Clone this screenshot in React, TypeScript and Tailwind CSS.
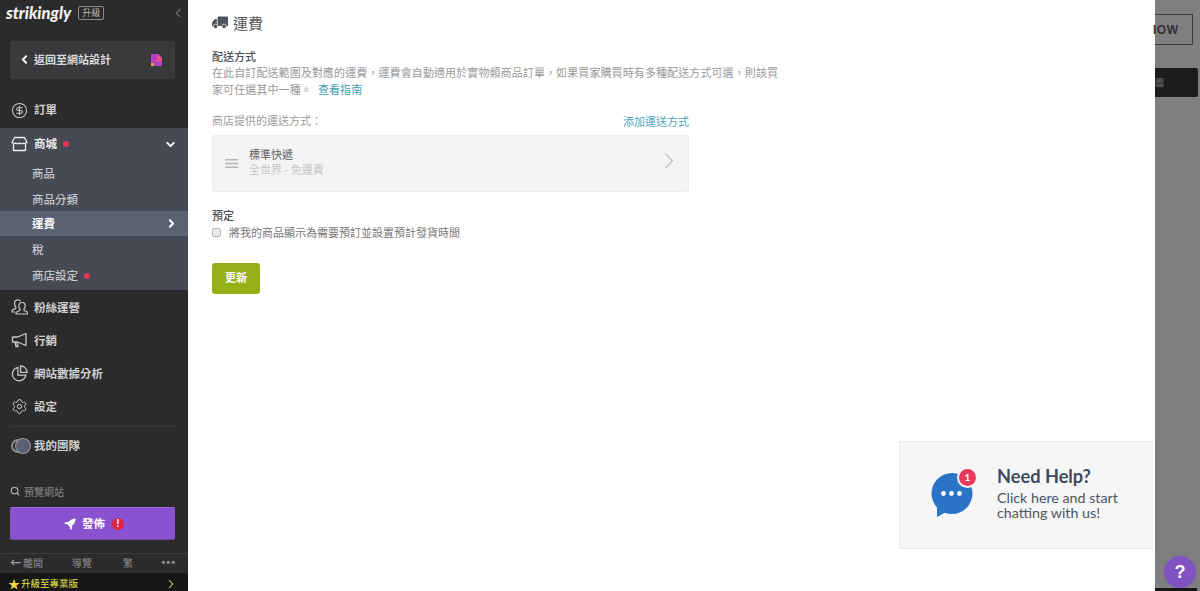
import { FC, ReactNode } from "react";
import { ChevronDown, ChevronLeft, ChevronRight, CircleDollarSign, Search, Settings } from "lucide-react";

const CJK = "font-['Noto_Sans_CJK_TC','Liberation_Sans',sans-serif]";

const Dot: FC = () => <span className="ml-1.5 h-[6px] w-[6px] rounded-full bg-[#e0394f]" />;

const NavRow: FC<{ icon: ReactNode; label: string; h: string }> = ({ icon, label, h }) => (
  <div className={`flex items-center pl-[11px] text-[11.5px] font-bold text-[#cfcfcf] ${h}`}>
    <span className="flex w-[23px] text-[#c9c9c9]">{icon}</span>
    {label}
  </div>
);

const SubRow: FC<{ label: string; h: string; dot?: boolean }> = ({ label, h, dot }) => (
  <div className={`flex items-center pl-8 pt-[2px] text-[11.5px] font-medium text-[#c3c6cc] ${h}`}>
    {label}
    {dot && <Dot />}
  </div>
);

const StoreIcon: FC = () => (
  <svg width="17" height="16" viewBox="0 0 17 16" fill="none" stroke="currentColor" strokeWidth="1.3" strokeLinejoin="round">
    <path d="M3.5 1.5h10l2.5 5q-1.5 1.2-3.8.7-1.8 1-3.7 0-1.9 1-3.7 0-2.3.5-3.8-.7Z" />
    <path d="M2.5 8v6.5h12V8" />
  </svg>
);

const FansIcon: FC = () => (
  <svg width="17" height="16" viewBox="0 0 17 16" fill="none" stroke="currentColor" strokeWidth="1.2" strokeLinejoin="round">
    <path d="M9.5 2.2C8.8 1.3 8 .9 7 .9 4.8.9 3.5 2.5 3.5 4.7c0 1.4.6 2.6 1.3 3.3v1.4L1 11.2V13h3" />
    <path d="M11 3.5c-2 0-3.2 1.5-3.2 3.5 0 1.3.5 2.4 1.2 3v1.3L5 13.5V15h12v-1.5l-4-2.2V10c.7-.6 1.2-1.7 1.2-3 0-2-1.2-3.5-3.2-3.5Z" />
  </svg>
);

const HornIcon: FC = () => (
  <svg width="17" height="16" viewBox="0 0 17 16" fill="none" stroke="currentColor" strokeWidth="1.3" strokeLinejoin="round">
    <path d="M1.5 5h5L15 1.5v12L6.5 10h-5Z" />
    <path d="M4 10l1 4.5h2L6 10.2" />
  </svg>
);

const PieIcon: FC = () => (
  <svg width="17" height="17" viewBox="0 0 16 16" fill="none" stroke="currentColor" strokeWidth="1.2">
    <path d="M6.5 2.2A6.4 6.4 0 1 0 14 9.5H6.5Z" />
    <path d="M9 .8A6.4 6.4 0 0 1 15.2 7H9Z" />
  </svg>
);

const Sidebar: FC = () => (
  <aside className="flex h-[591px] w-[188px] shrink-0 flex-col bg-[#2b2b2b]">
    <div className="flex h-[27px] items-center pl-[6px] pr-[3px]">
      <span className="font-['Lato',sans-serif] text-[16.5px] font-black italic leading-none text-[#f2f2f2]">strikingly</span>
      <span className="ml-[7px] rounded-[2px] border border-[#8a8a8a] px-[3px] text-[9px] leading-[12px] text-[#b5b5b5]">升級</span>
      <ChevronLeft size={14} strokeWidth={3} className="ml-auto text-[#5f636b]" />
    </div>
    <div className="ml-2.5 mr-[13px] mt-3.5 flex h-[38px] items-center rounded-[2px] bg-[#3a3a3c] pl-2 pr-3 text-[11px] font-bold text-[#dcdcdc]">
      <ChevronLeft size={13} strokeWidth={3.5} className="mr-[3px] text-white" />
      返回至網站設計
      <svg className="ml-auto" width="13" height="14" viewBox="0 0 13 14">
        <path d="M1 1h7l4 4v8H1Z" fill="#b43fc4" />
        <path d="M8 1l4 4v4H6Z" fill="#e2518c" />
        <path d="M1 10h3v3H1Z" fill="#d9a13a" />
      </svg>
    </div>
    <div className="mt-3 pt-[2px]">
      <NavRow h="h-[35px]" icon={<CircleDollarSign size={17} strokeWidth={1.5} />} label="訂單" />
    </div>
    <div className="h-[163px] bg-[#454a55]">
      <div className="flex h-[31px] items-center pl-[11px] pr-[11px] pt-[2px] text-[11.5px] font-bold text-[#ececec]">
        <span className="flex w-[23px]"><StoreIcon /></span>
        商城
        <Dot />
        <ChevronDown size={13} strokeWidth={3.5} className="ml-auto text-white" />
      </div>
      <SubRow h="h-[28px]" label="商品" />
      <SubRow h="h-[24px]" label="商品分類" />
      <div className="flex h-[25px] items-center bg-[#5a6270] pl-8 pr-[10px] pt-[2px] text-[11.5px] font-bold text-white">
        運費
        <ChevronRight size={13} strokeWidth={3.5} className="-mt-[2px] ml-auto" />
      </div>
      <SubRow h="h-[27px]" label="稅" />
      <SubRow h="h-[24px]" label="商店設定" dot />
    </div>
    <div className="mt-[1px]">
      <NavRow h="h-[33px]" icon={<FansIcon />} label="粉絲運營" />
      <NavRow h="h-[33px]" icon={<HornIcon />} label="行銷" />
      <NavRow h="h-[33px]" icon={<PieIcon />} label="網站數據分析" />
      <NavRow h="h-[33px]" icon={<Settings size={17} strokeWidth={1.4} />} label="設定" />
    </div>
    <div className="ml-2.5 mr-[13px] mt-[3px] border-t border-[#3a3a3a]" />
    <div className="mt-[1px] flex h-[37px] items-center pl-[11px] text-[11.5px] font-bold text-[#cfcfcf]">
      <span className="relative mr-[4px] h-[14px] w-[19px]">
        <span className="absolute left-0 top-0 h-[14px] w-[14px] rounded-full border-2 border-[#8b8b8b]" />
        <span className="absolute left-[5px] top-0 h-[14px] w-[14px] rounded-full bg-[#5c5f78] ring-1 ring-[#9a9a9a]" />
      </span>
      我的團隊
    </div>
    <div className="mt-[17px] flex h-[20px] items-center pl-2.5 text-[10px] text-[#8a8a8a]">
      <Search size={10} strokeWidth={3} className="mr-[4px] text-[#a5a5a5]" />
      預覽網站
    </div>
    <div className="ml-2.5 mr-[13px] mt-[6px] flex h-[33px] items-center justify-center rounded-[2px] border-b border-t border-[#9a6bd8] border-b-[#6e46a8] bg-[#8a52d1] pl-[3px] text-[11.5px] font-bold text-white">
      <svg className="mr-[6px]" width="12" height="12" viewBox="0 0 12 12" fill="currentColor">
        <path d="M11.6.4C8.8.4 6.2 1.6 4.4 4H1.8L.2 6h2.7l3.2 3.2V12l2-1.6V7.6C10.4 5.8 11.6 3.2 11.6.4Z" />
      </svg>
      發佈
      <span className="ml-[7px] flex h-[12px] w-[12px] items-center justify-center rounded-full bg-[#e0213f] font-['Liberation_Sans',sans-serif] text-[10px] font-bold leading-none">!</span>
    </div>
    <div className="mt-[13px] flex h-[20px] items-center border-t border-[#3a3a3a] pb-[3px] pl-2.5 pr-3 text-[10px] text-[#8c8c8c]">
      <span className="mr-[2px] text-[11px] font-bold text-[#a0a0a0]">←</span>
      <span className="w-[49px]">離開</span>
      <span className="w-[51px]">導覽</span>
      <span>繁</span>
      <span className="ml-auto font-['Liberation_Sans',sans-serif] text-[11px] font-bold leading-none tracking-[1px]">•••</span>
    </div>
    <div className="flex h-[18px] items-center bg-[#161616] pl-2 pr-[10px] pt-[3px] text-[9.5px] text-[#e8e34c]">
      <span className="mr-[1px] text-[12px] leading-none text-[#f0d93a]">★</span>
      升級至專業版
      <ChevronRight size={14} strokeWidth={1.8} className="ml-auto" />
    </div>
  </aside>
);

const ShippingForm: FC = () => (
  <main className="h-[591px] w-[967px] shrink-0 bg-white pl-6 pt-[12px] text-[11px]">
    <div className="flex h-[21px] items-center text-[15px] leading-none text-[#555a60]">
      <svg className="mr-[5px]" width="16" height="13" viewBox="0 0 16 13" fill="#50555b">
        <path d="M5.6 1.2Q5.6.5 6.3.5h9Q16 .5 16 1.2V10H5.6Z" />
        <path d="M4.8 3H3L0 6.2V10h4.8Z" />
        <circle cx="3.5" cy="10.3" r="2.2" stroke="#fff" strokeWidth=".6" />
        <circle cx="12" cy="10.3" r="2.2" stroke="#fff" strokeWidth=".6" />
      </svg>
      運費
    </div>
    <div className="mt-[15px] font-medium leading-[16px] text-[#4b4f55]">配送方式</div>
    <div className="w-[568px] leading-[17px] tracking-[0.1px] text-[#999]">
      <p>在此自訂配送範圍及對應的運費，運費會自動適用於實物類商品訂單，如果買家購買時有多種配送方式可選，則該買</p>
      <div className="flex gap-[6px]">
        <span>家可任選其中一種。</span>
        <span className="text-[#3f9db5]">查看指南</span>
      </div>
    </div>
    <div className="mt-[14px] flex w-[477px] items-end justify-between leading-[16px]">
      <span className="text-[#9b9b9b]">商店提供的運送方式：</span>
      <span className="translate-y-[1px] text-[#4aa5bd]">添加運送方式</span>
    </div>
    <div className="mt-[7px] flex h-[57px] w-[477px] items-center rounded-[3px] border border-[#ececec] bg-[#f4f4f4] pl-3 pr-[5px]">
      <svg width="13" height="9" viewBox="0 0 13 9" fill="#b3b3b3">
        <path d="M0 0h13v1.4H0ZM0 3.8h13v1.4H0ZM0 7.6h13V9H0Z" />
      </svg>
      <div className="ml-[11px] pb-[4px] leading-[15px]">
        <div className="text-[#5c5c5c]">標準快遞</div>
        <div className="text-[#c6c6c6]">全世界 - 免運費</div>
      </div>
      <ChevronRight size={28} strokeWidth={0.8} className="-mt-[5px] ml-auto text-[#8f8f8f]" />
    </div>
    <div className="mt-[15px] font-medium leading-[16px] text-[#4b4f55]">預定</div>
    <label className="mt-[1px] flex items-center leading-[16px] text-[#777]">
      <span className="mr-2 h-[9px] w-[9px] rounded-[2px] border border-[#b5b5b5] bg-[#e9e9e9]" />
      將我的商品顯示為需要預訂並設置預計發貨時間
    </label>
    <button className="mt-[23px] flex h-[31px] w-[48px] items-center justify-center rounded-[3px] bg-[#95b117] pb-[2px] font-bold text-white">更新</button>
  </main>
);

const App: FC = () => (
  <div className={`relative flex h-[591px] w-[1200px] overflow-hidden bg-[#7f7f7f] ${CJK}`}>
    <Sidebar />
    <ShippingForm />
    <div className="flex-1 pt-[14px]">
      <div className="flex h-[31px] w-[38px] items-center border-y border-r border-[#3c3c3c] font-['Liberation_Sans',sans-serif] text-[12px] font-bold tracking-[0.5px] text-[#333]">
        <span className="-ml-[2px]">IOW</span>
      </div>
      <div className="mt-[23px] flex h-[29px] w-[43px] items-center rounded-r-[2px] bg-[#1c1c1c] text-[9px] text-[#777]">圖</div>
      <div className="mt-[491px] h-[3px] w-[42px] bg-[#161616]" />
    </div>
    <div className="absolute left-[899px] top-[441px] flex h-[108px] w-[254px] items-center border border-r-0 border-[#e9e9e9] bg-[#f6f6f6] pl-[31px] font-['Lato',sans-serif]">
      <div className="relative h-[44px] w-[42px]">
        <svg width="42" height="44" viewBox="0 0 42 44">
          <circle cx="21" cy="20.5" r="20.5" fill="#2b73c7" />
          <path d="M6 30l0 14 11-6Z" fill="#2b73c7" />
          <circle cx="12.5" cy="20.5" r="2.4" fill="#fff" />
          <circle cx="20.5" cy="20.5" r="2.4" fill="#fff" />
          <circle cx="28.5" cy="20.5" r="2.4" fill="#fff" />
        </svg>
        <span className="absolute -right-[3px] -top-[4px] flex h-[17px] w-[17px] items-center justify-center rounded-full bg-[#e8395a] text-[10px] font-bold text-white ring-2 ring-[#f6f6f6]">1</span>
      </div>
      <div className="ml-[24px] pb-[7px] text-[#4b5563]">
        <div className="text-[18.2px] font-bold leading-[24px] text-[#3f4a5c]">Need Help?</div>
        <div className="mt-[2px] text-[14.25px] leading-[15px]">
          Click here and start
          <br />
          chatting with us!
        </div>
      </div>
    </div>
    <div className="absolute left-[1164px] top-[556px] flex h-[32px] w-[32px] items-center justify-center rounded-full bg-[#8152c2] font-['Liberation_Sans',sans-serif] text-[18px] font-bold text-white">?</div>
  </div>
);

export default App;
